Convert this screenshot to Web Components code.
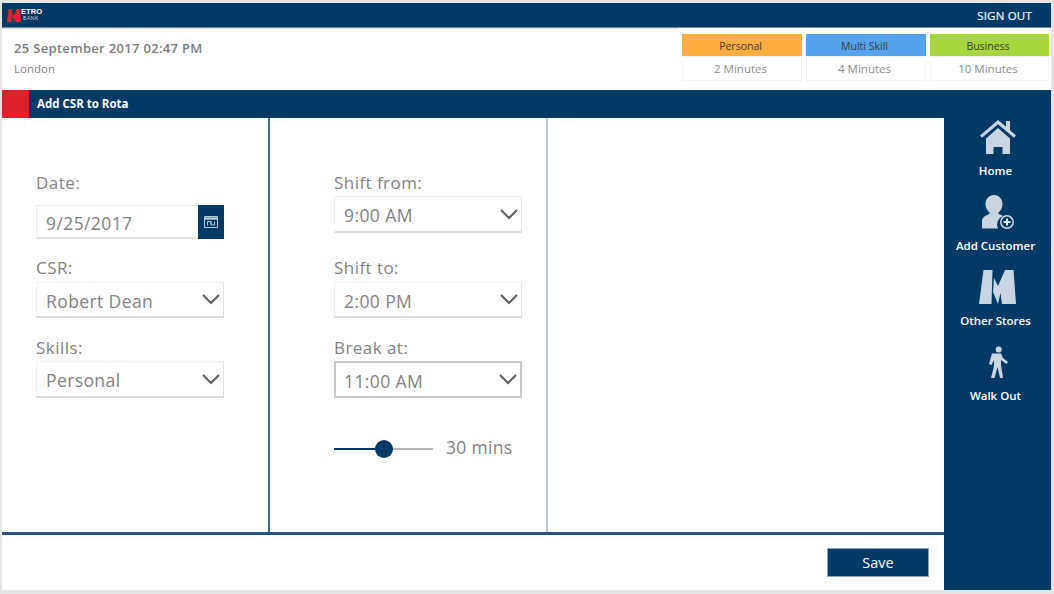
<!DOCTYPE html>
<html lang="en">
<head>
<meta charset="utf-8">
<title>Add CSR to Rota</title>
<style>
  html, body { margin: 0; height: 100%; }
  body {
    background: #e4e4e4;
    font-family: "Open Sans", "Noto Sans", sans-serif;
    --navy: #023a66;
    --text: #828282;
    box-sizing: border-box;
    padding: 3px 3px 3px 2px;
    height: 594px;
    overflow: hidden;
  }
</style>
</head>
<body>
<rota-app></rota-app>

<script>
class TopBar extends HTMLElement {
  connectedCallback() {
    if (this.shadowRoot) return;
    this.attachShadow({ mode: 'open' }).innerHTML = `
      <style>
        :host { display: flex; align-items: center; justify-content: space-between; height: 25px; background: var(--navy); border-bottom: 1px solid #6f8ba5; box-sizing: border-box; }
        #logo { display: flex; align-items: center; margin-left: 5px; }
        svg { width: 14px; height: 13px; fill: #e0202e; display: block; }
        #words { display: flex; flex-direction: column; font-family: "Liberation Sans", sans-serif; line-height: 6px; color: #fff; font-weight: 700; }
        #words b { font-size: 7.5px; letter-spacing: .1px; }
        #words i { font-size: 5px; font-style: normal; font-weight: 400; color: #c7d3de; letter-spacing: .6px; padding-left: 2px; }
        #out { color: #f2f5f7; font-size: 11.5px; letter-spacing: .2px; margin-right: 19px; -webkit-text-stroke: .2px #f2f5f7; }
      </style>
      <div id="logo">
        <svg viewBox="0 0 37 34"><path d="M4.500 0H13.500L12.500 34H0z"/><path d="M15 8L19 16L26 0H34.500L37 34H23L21.500 23L19 34L14 22z"/></svg>
        <div id="words"><b>ETRO</b><i>BANK</i></div>
      </div>
      <span id="out">SIGN OUT</span>`;
  }
}

class SkillTile extends HTMLElement {
  connectedCallback() {
    if (this.shadowRoot) return;
    this.attachShadow({ mode: 'open' }).innerHTML = `
      <style>
        :host { display: flex; flex-direction: column; width: var(--w, 120px); height: 47px; border: 1px solid #f3f3f3; border-top: 0; box-sizing: border-box; }
        #name { height: 22px; line-height: 24px; margin: 0 -1px; padding-right: 3px; text-align: center; font-size: 10.5px; color: #3a3a3a; background: var(--tile); }
        #time { flex: 1; display: flex; align-items: center; justify-content: center; padding-right: 3px; font-size: 11.5px; color: #8c8c8c; border-top: 1px solid #f0f0f0; }
      </style>
      <div id="name">${this.getAttribute('name')}</div>
      <div id="time">${this.getAttribute('time')}</div>`;
  }
}

class InfoBar extends HTMLElement {
  connectedCallback() {
    if (this.shadowRoot) return;
    this.attachShadow({ mode: 'open' }).innerHTML = `
      <style>
        :host { display: flex; height: 62px; background: #fff; box-sizing: border-box; }
        #when { flex: 1; padding: 11px 0 0 12px; margin-right: 4px; height: 12px; border-top: 1px solid #dcdcdc; box-sizing: content-box; }
        #date { font-size: 13px; font-weight: 600; letter-spacing: .32px; color: #7c7c7c; line-height: 18px; margin-top: -1px; }
        #place { font-size: 11.5px; color: #868686; line-height: 16px; margin-top: 4px; }
        #tiles { display: flex; gap: 4px; padding: 6px 2px 0 0; }
      </style>
      <div id="when">
        <div id="date">25 September 2017 02:47 PM</div>
        <div id="place">London</div>
      </div>
      <div id="tiles"><slot></slot></div>`;
  }
}

class TitleBar extends HTMLElement {
  connectedCallback() {
    if (this.shadowRoot) return;
    this.attachShadow({ mode: 'open' }).innerHTML = `
      <style>
        :host { display: flex; align-items: center; height: 28px; background: var(--navy); }
        #flag { width: 27px; height: 100%; background: #e01f2d; }
        #label { color: #fff; font-size: 11.5px; font-weight: 700; margin: -1px 0 0 8px; }
      </style>
      <div id="flag"></div>
      <div id="label"><slot></slot></div>`;
  }
}

class NavItem extends HTMLElement {
  connectedCallback() {
    if (this.shadowRoot) return;
    this.attachShadow({ mode: 'open' }).innerHTML = `
      <style>
        :host { display: flex; flex-direction: column; align-items: center; height: 75px; }
        #icon { height: 43px; padding-top: 2px; display: flex; align-items: flex-start; justify-content: center; }
        ::slotted(svg) { display: block; fill: #c9d6e2; }
        #label { color: #fff; font-size: 11.5px; font-weight: 600; line-height: 16px; margin-right: 4px; white-space: nowrap; }
      </style>
      <div id="icon"><slot></slot></div>
      <div id="label">${this.getAttribute('label')}</div>`;
  }
}

class FormField extends HTMLElement {
  connectedCallback() {
    if (this.shadowRoot) return;
    this.attachShadow({ mode: 'open' }).innerHTML = `
      <style>
        :host { display: flex; flex-direction: column; }
        #label { height: 26px; line-height: 26px; font-size: 17px; letter-spacing: .45px; color: var(--text); margin-bottom: var(--label-gap, 0); }
      </style>
      <div id="label">${this.getAttribute('label')}</div>
      <slot></slot>`;
  }
}

class SelectBox extends HTMLElement {
  connectedCallback() {
    if (this.shadowRoot) return;
    this.attachShadow({ mode: 'open' }).innerHTML = `
      <style>
        :host { display: flex; align-items: center; justify-content: space-between; width: 188px; height: var(--h, 36px); box-sizing: border-box; background: #fff; border: 1px solid #efefef; border-bottom: 2px solid #dcdcdc; border-right-color: #e2e2e2; padding: 0 2px 0 9px; }
        :host([focused]) { border: 2px solid #c9c9c9; padding-left: 8px; }
        #value { font-size: 17.5px; letter-spacing: .4px; color: var(--text); margin-top: 2px; }
        svg { width: 20px; height: 12px; margin-top: -1px; fill: none; stroke: #5f5f5f; stroke-width: 2; }
      </style>
      <span id="value"><slot></slot></span>
      <svg viewBox="0 0 20 12"><path d="M2 2l8 8 8-8"/></svg>`;
  }
}

class DateBox extends HTMLElement {
  connectedCallback() {
    if (this.shadowRoot) return;
    this.attachShadow({ mode: 'open' }).innerHTML = `
      <style>
        :host { display: flex; align-items: stretch; width: 188px; height: 34px; box-sizing: border-box; background: #fff; border: 1px solid #ececec; border-bottom: 2px solid #e2e2e2; }
        #value { flex: 1; align-self: center; font-size: 17.5px; letter-spacing: .4px; color: var(--text); padding-left: 9px; margin-top: 2px; }
        #cal { width: 26px; margin: -1px -1px -2px 0; background: var(--navy); display: flex; align-items: center; justify-content: center; }
        svg { width: 14px; height: 12px; fill: none; stroke: #b7c8d6; stroke-width: 1; }
      </style>
      <span id="value"><slot></slot></span>
      <div id="cal"><svg viewBox="0 0 14 12"><path d="M.5.500h13v11H.5z"/><path d="M.5 2.500h13" stroke-width="2.500"/><path d="M3.500 9.500V5.500h3.500v3M7 5.500v3.500h3.500V5.500"/></svg></div>`;
  }
}

class RangeSlider extends HTMLElement {
  connectedCallback() {
    if (this.shadowRoot) return;
    this.attachShadow({ mode: 'open' }).innerHTML = `
      <style>
        :host { display: flex; align-items: center; gap: 13px; height: 26px; }
        #track { position: relative; width: 99px; height: 2px; background: #b5b5b5; }
        #fill { width: 49px; height: 100%; background: var(--navy); }
        #thumb { position: absolute; left: 41px; top: -8px; width: 18px; height: 18px; border-radius: 50%; background: var(--navy); }
        #value { font-size: 17.5px; letter-spacing: .3px; color: var(--text); margin-top: -5px; }
      </style>
      <div id="track"><div id="fill"></div><div id="thumb"></div></div>
      <span id="value"><slot></slot></span>`;
  }
}

class RotaApp extends HTMLElement {
  connectedCallback() {
    if (this.shadowRoot) return;
    this.attachShadow({ mode: 'open' }).innerHTML = `
      <style>
        :host { display: flex; flex-direction: column; width: 1049px; height: 587px; }
        #body { flex: 1; display: flex; min-height: 0; }
        main { flex: 1; display: flex; flex-direction: column; background: #fff; }
        #cols { flex: 1; display: flex; border-bottom: 3px solid #23527e; }
        .col { box-sizing: border-box; padding-top: 52px; border-right: 2px solid #3e6a91; }
        #c1 { width: 268px; padding-left: 34px; }
        #c2 { width: 278px; padding-left: 64px; border-right-color: #b9c9d8; }
        #c3 { flex: 1; border: 0; }
        footer { height: 55px; box-sizing: border-box; display: flex; justify-content: flex-end; padding: 13px 15px 0 0; }
        button { width: 102px; height: 29px; border: 1px solid #8aa5bd; background: var(--navy); color: #fff; font: 500 14.5px "Open Sans", sans-serif; padding: 0; }
        aside { width: 107px; background: var(--navy); display: flex; flex-direction: column; }
      </style>
      <top-bar></top-bar>
      <info-bar>
        <skill-tile name="Personal" time="2 Minutes" style="--tile:#ffad3e"></skill-tile>
        <skill-tile name="Multi Skill" time="4 Minutes" style="--tile:#54a3ec"></skill-tile>
        <skill-tile name="Business" time="10 Minutes" style="--tile:#a6d63c;--w:119px"></skill-tile>
      </info-bar>
      <title-bar>Add CSR to Rota</title-bar>
      <div id="body">
        <main>
          <div id="cols">
            <div class="col" id="c1">
              <form-field label="Date:" style="--label-gap:9px"><date-box>9/25/2017</date-box></form-field>
              <form-field label="CSR:" style="margin-top:16px"><select-box style="margin-top:1px">Robert Dean</select-box></form-field>
              <form-field label="Skills:" style="margin-top:17px"><select-box style="--h:37px">Personal</select-box></form-field>
            </div>
            <div class="col" id="c2">
              <form-field label="Shift from:"><select-box style="--h:37px">9:00 AM</select-box></form-field>
              <form-field label="Shift to:" style="margin-top:22px"><select-box style="margin-top:1px">2:00 PM</select-box></form-field>
              <form-field label="Break at:" style="margin-top:17px"><select-box focused style="--h:37px">11:00 AM</select-box></form-field>
              <range-slider style="margin-top:38px">30 mins</range-slider>
            </div>
            <div class="col" id="c3"></div>
          </div>
          <footer><button>Save</button></footer>
        </main>
        <aside>
          <nav-item label="Home">
            <svg width="36" height="35" viewBox="0 0 36 35"><path d="M18 0L0 15.500l2 2.300L18 4.300l16 13.500 2-2.300-6-5.200V1h-4v5.800z"/><path d="M6 18.500L18 8l12 10.500V34h-7.500V27h-9v7H6z"/></svg>
          </nav-item>
          <nav-item label="Add Customer">
            <svg width="32" height="34" viewBox="0 0 32 34"><path d="M12 0c5 0 8.500 4 8.500 9 0 4-2 7-4 8.500V19c1.500.5 3 1 4.500 2a9 9 0 0 0-5 12.500H0V26c0-4 4-5.500 7.500-7v-1.500C5.500 16 3.500 13 3.500 9c0-5 3.500-9 8.500-9z"/><circle cx="25" cy="27" r="6.200" fill="none" stroke="#c9d6e2" stroke-width="1.500"/><path d="M25 23.500v7M21.500 27h7" stroke="#dfe7ee" stroke-width="2"/></svg>
          </nav-item>
          <nav-item label="Other Stores">
            <svg width="37" height="34" viewBox="0 0 37 34"><path d="M4.500 0H13.500L12.500 34H0z"/><path d="M15 8L19 16L26 0H34.500L37 34H23L21.500 23L19 34L14 22z"/></svg>
          </nav-item>
          <nav-item label="Walk Out">
            <svg style="margin-top:1px" width="20" height="32" viewBox="0 0 20 32"><circle cx="10.700" cy="3.500" r="3"/><path d="M4 7.500H13L15 12L20 16L18.500 18L13 14L13 19L15 32H12L9.500 21L6.500 32H3L6 20V14L3.500 19L1 18z"/></svg>
          </nav-item>
        </aside>
      </div>`;
  }
}

customElements.define('top-bar', TopBar);
customElements.define('skill-tile', SkillTile);
customElements.define('info-bar', InfoBar);
customElements.define('title-bar', TitleBar);
customElements.define('nav-item', NavItem);
customElements.define('form-field', FormField);
customElements.define('select-box', SelectBox);
customElements.define('date-box', DateBox);
customElements.define('range-slider', RangeSlider);
customElements.define('rota-app', RotaApp);
</script>
</body>
</html>
